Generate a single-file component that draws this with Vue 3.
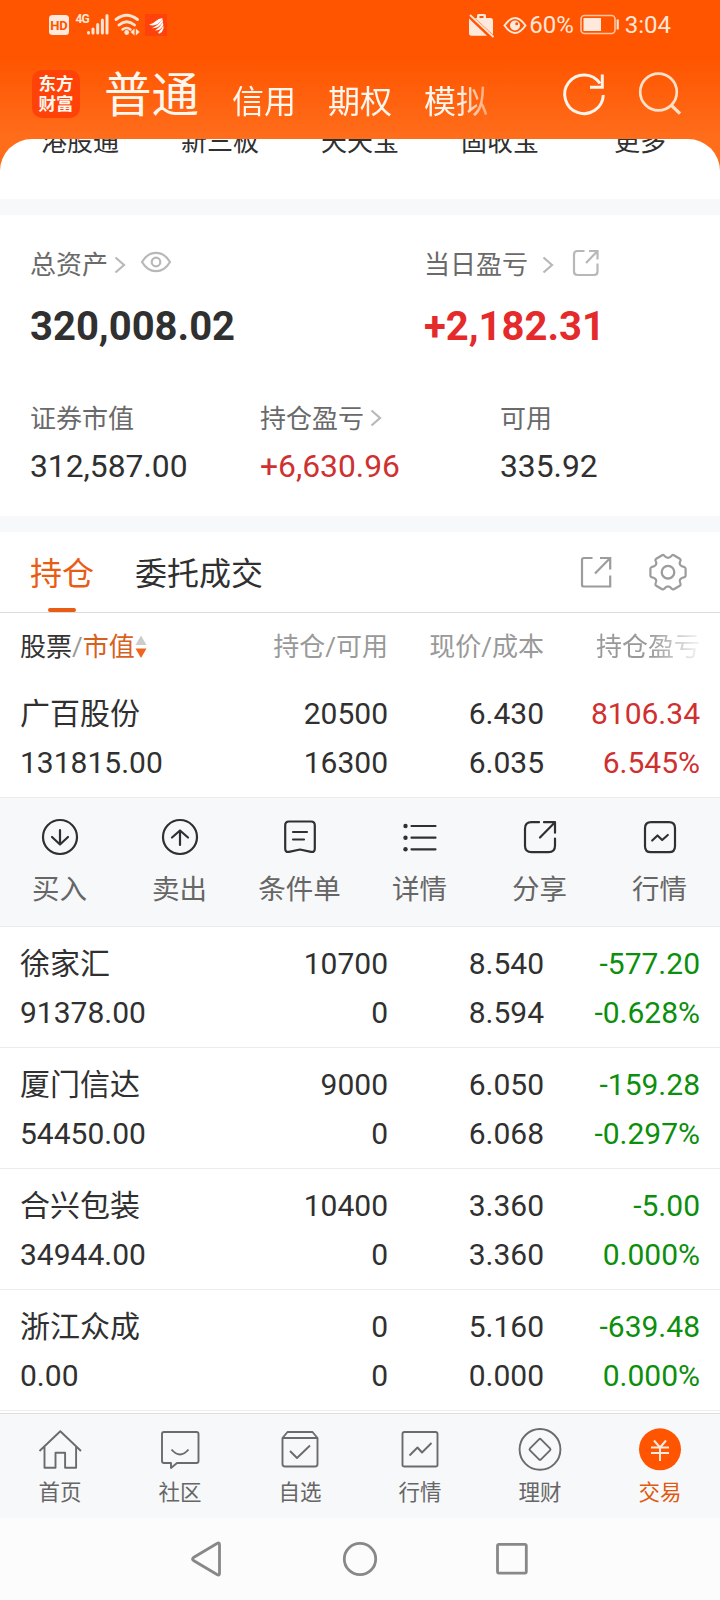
<script setup>
const shortcuts = ['港股通', '新三板', '天天宝', '固收宝', '更多']

const holdings = [
  { name: '广百股份', value: '131815.00', held: '20500', usable: '16300', price: '6.430', cost: '6.035', gain: '8106.34', rate: '6.545%', up: true, open: true },
  { name: '徐家汇', value: '91378.00', held: '10700', usable: '0', price: '8.540', cost: '8.594', gain: '-577.20', rate: '-0.628%' },
  { name: '厦门信达', value: '54450.00', held: '9000', usable: '0', price: '6.050', cost: '6.068', gain: '-159.28', rate: '-0.297%' },
  { name: '合兴包装', value: '34944.00', held: '10400', usable: '0', price: '3.360', cost: '3.360', gain: '-5.00', rate: '0.000%' },
  { name: '浙江众成', value: '0.00', held: '0', usable: '0', price: '5.160', cost: '0.000', gain: '-639.48', rate: '0.000%' }
]

const actions = [
  { label: '买入', d: 'M20 3a17 17 0 1 0 0 34a17 17 0 1 0 0-34M20 13v14.5M12 20l8 7.5l8-7.5' },
  { label: '卖出', d: 'M20 3a17 17 0 1 0 0 34a17 17 0 1 0 0-34M20 28V13.5M12 20.5l8-7l8 7' },
  { label: '条件单', d: 'M9 4.500h22q3.800 0 3.800 3.800v23.200q0 4-3.800 3.300L20 32.500L9 34.800q-3.800.700-3.800-3.300V8.300Q5.200 4.500 9 4.500M13 15h14M13 22.500h11' },
  { label: '详情', d: 'M11.500 9h24M11.500 20.700h24M11.500 32.300h24', list: true },
  { label: '分享', d: 'M19 5.200h-7.500q-6.500 0-6.500 6.500v17q0 6.500 6.500 6.500h17q6.500 0 6.500-6.500V21.500M24 5.200h11v10.500M35 5.200L20 20.500' },
  { label: '行情', d: 'M11 5.200h18q6 0 6 6v18q0 6-6 6H11q-6 0-6-6v-18q0-6 6-6M12.200 23.500l5.300-5l4.700 4.500l5.600-5' }
]

const tabs = [
  { label: '首页', d: 'M3.500 23L24.300 3.200L45 23M8.500 19v20.800h11V24.800h9.600v15h11V19' },
  { label: '社区', d: 'M8 4h32.500q2 0 2 2v27q0 2-2 2H21l-6 5v-5H8q-2 0-2-2V6q0-2 2-2M15.500 21.500q8.500 10 17 0' },
  { label: '自选', d: 'M6.500 10h35v26q0 2.500-2.500 2.500H9q-2.500 0-2.500-2.500V10l5-6h25l5 6M14 23l7 7L34 17.500' },
  { label: '行情', d: 'M8.500 4h31q2 0 2 2v31q0 1.500-2 1.500h-31q-2 0-2-1.500V6q0-2 2-2M13.500 27.500l8-8l4.500 5l9.500-9.500' },
  { label: '理财', d: 'M24 1a20.400 20.400 0 1 0 0 40.800a20.400 20.400 0 1 0 0-40.800M23 11.300q1-1 2 0l9 9q1 1 0 2l-9 9q-1 1-2 0l-9-9q-1-1 0-2z' },
  { label: '交易', active: true }
]
</script>

<template>
  <div class="phone">
    <header class="top">
      <div class="status">
        <svg class="left-status" width="120" height="26" viewBox="0 0 120 26">
          <rect x="0" y="3" width="20" height="20" rx="3.500" fill="#ffe9dd" />
          <text x="10" y="17.700" text-anchor="middle" class="hd">HD</text>
          <text x="26.500" y="11" class="net">4G</text>
          <g stroke="#ffe3d3" stroke-width="3" stroke-linecap="round">
            <path d="M39.500 20.500v.5M44 17v4M48.700 12.500v8.500M53.400 8V21M58 3.500V21" />
          </g>
          <g fill="none" stroke="#ffe3d3" stroke-width="2.900" stroke-linecap="round">
            <path d="M67 7.500q10.500-8.500 21.500 0M70 13q7.700-6.500 15.500 0" />
            <path d="M73.500 17.500q4-3 8 0" stroke-width="2.400" />
          </g>
          <circle cx="77.700" cy="20.500" r="2.400" fill="#ffe3d3" />
          <path d="M85.500 16.500v7l-4-3.500zM86.800 16.500v7l4-3.500z" fill="#ffe3d3" />
          <rect x="96" y="2" width="22" height="22" fill="#ff420b" />
          <g fill="#fff">
            <path d="M100 12.800q4-1 6.500-3.500q3-3 7.200-3.300q-1.200 3.500-5 6q-4 2.500-8.700.8z" />
            <path d="M102.800 16.200q6-2.200 10.700-9.200l.4 2.500q-3.500 7-11.100 6.700z" />
            <path d="M106 18.500q5-3 7.900-8.500l.4 3q-2.300 5.500-8.300 5.500z" />
            <path d="M109 20.800q3.500-3 5.300-7.300l.2 3q-1 3.800-4 5.300z" />
          </g>
        </svg>
        <div class="right-status">
          <svg width="60" height="26" viewBox="0 0 60 26">
            <path d="M1 6.500L19 23.800H3.500Q1 23.800 1 21.300zM7 6H9V3.500q0-1.500 1.500-1.500h6q1.500 0 1.500 1.500V6h4.500q2.500 0 2.500 2.500v14.300zM11.500 4v2h4V4z" fill="#ffe9dd" fill-rule="evenodd" />
            <path d="M2 3L25.500 25" stroke="#ffe3d3" stroke-width="1.800" />
            <path d="M36.500 13.500q10.500-15 21 0q-10.500 15-21 0z" fill="none" stroke="#ffe9dd" stroke-width="2" />
            <circle cx="47" cy="13.500" r="5" fill="#ffe9dd" />
            <circle cx="48.700" cy="11.800" r="1.500" fill="#ff5500" />
          </svg>
          <span class="percent">60%</span>
          <svg width="40" height="22" viewBox="0 0 40 22">
            <rect x="1" y="1.500" width="34" height="18" rx="3.500" fill="none" stroke="#ffc4a0" stroke-width="1.600" />
            <rect x="3.500" y="4" width="17.500" height="13" fill="#ffe9dd" />
            <path d="M37.700 5.500v10" stroke="#ffe3d3" stroke-width="2.200" />
          </svg>
          <span class="clock">3:04</span>
        </div>
      </div>
      <div class="appbar">
        <div class="logo"><span>东方</span><span>财富</span></div>
        <span class="mode-main">普通</span>
        <nav class="modes"><span>信用</span><span>期权</span><span>模拟</span></nav>
        <svg class="tools" width="124" height="48" viewBox="0 0 124 48" fill="none">
          <path d="M39 13.500A19.300 19.300 0 1 0 42.300 25" stroke="#fff3eb" stroke-width="3" />
          <path d="M41.300 4.500v12.800H29" stroke="#fff3eb" stroke-width="3" />
          <circle cx="97.500" cy="22" r="18.300" stroke="#ffe0c8" stroke-width="2.700" />
          <path d="M110 35l9 8.700" stroke="#ffe0c8" stroke-width="3.200" />
        </svg>
      </div>
    </header>

    <section class="shortcuts">
      <div class="shortcut-row"><span v-for="s in shortcuts" :key="s">{{ s }}</span></div>
    </section>

    <section class="assets">
      <div class="summary">
        <div>
          <div class="label">总资产
            <svg class="chev near" width="12" height="18" viewBox="0 0 12 18"><path d="M1.500 1.500L10 9l-8.500 7.500" /></svg>
            <svg class="eye" width="32" height="22" viewBox="0 0 32 22"><path d="M2 11Q7.500 1.800 16 1.800T30 11Q24.500 20.200 16 20.200T2 11z" /><circle cx="16" cy="11" r="4.300" /></svg>
          </div>
          <div class="big">320,008.02</div>
        </div>
        <div>
          <div class="label">当日盈亏
            <svg class="chev far" width="12" height="18" viewBox="0 0 12 18"><path d="M1.500 1.500L10 9l-8.500 7.500" /></svg>
            <svg class="share-sm" width="28" height="28" viewBox="0 0 28 28"><path d="M12.500 2H5.500Q2 2 2 5.500v17Q2 26 5.500 26h16.500q3.500 0 3.500-3.500V14.500M17 2h8.500v8.500M25.500 2L14 14" /></svg>
          </div>
          <div class="big red">+2,182.31</div>
        </div>
      </div>
      <div class="details">
        <div><div class="label">证券市值</div><div class="mid">312,587.00</div></div>
        <div>
          <div class="label">持仓盈亏
            <svg class="chev pos" width="12" height="18" viewBox="0 0 12 18"><path d="M1.500 1.500L10 9l-8.500 7.500" /></svg>
          </div>
          <div class="mid crimson">+6,630.96</div>
        </div>
        <div><div class="label">可用</div><div class="mid">335.92</div></div>
      </div>
    </section>

    <section class="book">
      <div class="book-tabs">
        <span class="book-tab on">持仓</span>
        <span class="book-tab">委托成交</span>
        <svg class="book-tools" width="108" height="40" viewBox="0 0 108 40">
          <path d="M12.500 6H4Q2 6 2 8v25q0 1.500 2 1.500H30.200V23.500M20 6H30.200v11.500M30.200 6L15 21.500" />
          <g transform="translate(88 20.200)">
            <path stroke-linejoin="round" d="M16.500-5Q17.600-4.600 17.600-3.500V3.500Q17.600 4.600 16.500 5Q9.500 6.500 12.600 11.800Q12.800 13 11.800 13.500L5.800 17Q4.800 17.500 4 16.800Q0 11.700-4 16.800Q-4.800 17.500-5.800 17L-11.800 13.500Q-12.800 13-12.600 11.800Q-9.500 6.500-16.500 5Q-17.600 4.600-17.600 3.500V-3.500Q-17.600-4.600-16.500-5Q-9.500-6.500-12.600-11.800Q-12.800-13-11.800-13.500L-5.800-17Q-4.800-17.500-4-16.800Q0-11.700 4-16.800Q4.800-17.500 5.800-17L11.800-13.500Q12.800-13 12.600-11.800Q9.500-6.500 16.500-5z" />
            <circle r="6.300" stroke-width="2.300" />
          </g>
        </svg>
      </div>

      <div class="grid head">
        <span class="first"><b>股票</b>/<em>市值</em><svg width="12" height="24" viewBox="0 0 12 24"><path d="M6 .5l5.500 9.500H.5z" fill="#ccc" /><path d="M6 23L.5 13.500h11z" fill="#f0641e" /></svg></span>
        <span>持仓/可用</span>
        <span>现价/成本</span>
        <span class="fade">持仓盈亏</span>
      </div>

      <template v-for="h in holdings" :key="h.name">
        <div class="grid row">
          <span class="first">{{ h.name }}</span><span>{{ h.held }}</span><span>{{ h.price }}</span><span :class="h.up ? 'crimson' : 'green'">{{ h.gain }}</span>
          <span class="first">{{ h.value }}</span><span>{{ h.usable }}</span><span>{{ h.cost }}</span><span :class="h.up ? 'crimson' : 'green'">{{ h.rate }}</span>
        </div>
        <div v-if="h.open" class="actions">
          <div v-for="a in actions" :key="a.label" class="action">
            <svg width="40" height="40" viewBox="0 0 40 40">
              <path :d="a.d" />
              <g v-if="a.list" class="dots"><circle cx="5.500" cy="9" r="2.200" /><circle cx="5.500" cy="20.700" r="2.200" /><circle cx="5.500" cy="32.300" r="2.200" /></g>
            </svg>
            <span>{{ a.label }}</span>
          </div>
        </div>
      </template>
    </section>

    <nav class="tabbar">
      <div v-for="t in tabs" :key="t.label" class="tab" :class="{ active: t.active }">
        <svg width="48" height="44" viewBox="0 0 48 44">
          <path v-if="t.d" :d="t.d" />
          <template v-else>
            <circle cx="24" cy="21.300" r="21" />
            <path class="yen" d="M18 12.500l6 7l6-7M15 19.500h18M15 25h18M24 19.500V33" />
          </template>
        </svg>
        <span>{{ t.label }}</span>
      </div>
    </nav>

    <footer class="system">
      <svg width="340" height="40" viewBox="0 0 340 40">
        <path d="M27 4.500q2.500-1.500 2.500 1v29q0 2.500-2.500 1L3.500 21.500q-2-1.500 0-3z" />
        <circle cx="170" cy="20" r="15.700" />
        <rect x="307.500" y="5.300" width="28.800" height="28.800" rx="1.500" />
      </svg>
    </footer>
  </div>
</template>

<style>
body {
  background: #fff;
}
</style>

<style scoped>
.phone {
  width: 720px;
  height: 1600px;
  overflow: hidden;
  display: flex;
  flex-direction: column;
  background: #fff;
  color: #303030;
  font-family: Roboto, "Noto Sans CJK SC", sans-serif;
}
svg {
  display: block;
  flex: none;
}
.top {
  height: 172px;
  flex: none;
  background: linear-gradient(#ff5500 58px, #ff6c1a 135px);
}
.status {
  height: 50px;
  box-sizing: border-box;
  padding: 0 49px;
  display: flex;
  align-items: center;
  justify-content: space-between;
  color: #ffe6d8;
  font-size: 24px;
}
.hd {
  font: bold 13px Roboto, sans-serif;
  fill: #ff5500;
}
.net {
  font: bold 12px Roboto, sans-serif;
  letter-spacing: -1px;
  fill: #ffe3d3;
}
.left-status {
  overflow: visible;
}
.right-status {
  display: flex;
  align-items: center;
}
.percent {
  margin: 0 6px 0 1px;
}
.clock {
  margin-left: 5px;
}
.appbar {
  height: 88px;
  padding-left: 32px;
  display: flex;
  align-items: center;
  color: #fff6ee;
}
.logo {
  width: 48px;
  height: 48px;
  box-sizing: border-box;
  padding: 4px 0;
  border-radius: 10px;
  background: #ff4208;
  display: flex;
  flex-direction: column;
  align-items: center;
  font-size: 17.500px;
  font-weight: 700;
  line-height: 20px;
}
.mode-main {
  margin-left: 24px;
  padding-top: 4px;
  width: 96px;
  font-size: 47.500px;
  line-height: 84px;
  white-space: nowrap;
}
.modes {
  margin-left: 32px;
  width: 256px;
  padding-top: 16px;
  display: flex;
  gap: 32px;
  font-size: 32px;
  line-height: 40px;
  -webkit-mask-image: linear-gradient(90deg, #000 226px, rgba(0, 0, 0, 0.45) 256px);
  mask-image: linear-gradient(90deg, #000 226px, rgba(0, 0, 0, 0.45) 256px);
}
.tools {
  margin-left: 73px;
}
.shortcuts {
  height: 60px;
  flex: none;
  margin-top: -33px;
  border-radius: 32px 32px 0 0;
  background: #fff;
  overflow: hidden;
}
.shortcut-row {
  display: grid;
  grid-template-columns: repeat(5, 140px);
  justify-content: center;
  margin-top: -17px;
  text-align: center;
  font-size: 26px;
  line-height: 40px;
}
.assets {
  height: 317px;
  flex: none;
  box-sizing: border-box;
  padding: 31px 30px 0;
  border-top: 16px solid #f7f8fa;
}
.label {
  display: flex;
  align-items: center;
  height: 38px;
  color: #6a6a6a;
  font-size: 26px;
  line-height: 38px;
}
.label svg {
  fill: none;
  stroke: #b8b8b8;
  stroke-width: 2.200;
}
.chev.near {
  margin-left: 6px;
}
.label .eye {
  margin: -6px 0 0 14px;
}
.chev.far {
  margin-left: 14px;
}
.label .share-sm {
  margin: -4px 0 0 18px;
}
.chev.pos {
  margin: -2px 0 0 6px;
}
.summary {
  display: grid;
  grid-template-columns: 394px 1fr;
}
.big {
  margin-top: 18px;
  height: 50px;
  line-height: 50px;
  font-size: 40px;
  font-weight: 700;
}
.details {
  margin-top: 48px;
  display: grid;
  grid-template-columns: 230px 240px 1fr;
}
.mid {
  margin-top: 8px;
  font-size: 31.800px;
  line-height: 40px;
}
.red {
  color: #e42a2a;
}
.crimson {
  color: #cf3030;
}
.green {
  color: #0c8f0c;
}
.book {
  flex: 1;
  border-top: 16px solid #f7f8fa;
}
.book-tabs {
  height: 80px;
  padding-left: 30px;
  border-bottom: 1px solid #dcdcdc;
  display: flex;
  gap: 41px;
  font-size: 32px;
  line-height: 84px;
}
.book-tab.on {
  position: relative;
  color: #e85c14;
}
.book-tab.on::after {
  content: "";
  position: absolute;
  left: 18px;
  top: 76px;
  width: 28px;
  height: 4px;
  border-radius: 2px;
  background: #e85c14;
}
.book-tools {
  margin: 20px 32px 0 auto;
  fill: none;
  stroke: #9c9c9c;
  stroke-width: 2.200;
}
.grid {
  display: grid;
  grid-template-columns: 217px 151px 156px 156px;
  padding: 0 20px;
  text-align: right;
}
.first {
  text-align: left;
}
.head {
  height: 64px;
  color: #999;
  font-size: 26px;
  line-height: 68px;
}
.head .first {
  display: flex;
  align-items: center;
  height: 68px;
}
.head b {
  font-weight: 400;
  color: #333;
}
.head em {
  font-style: normal;
  color: #d8601e;
}
.head .first svg {
  margin-left: 0;
}
.fade {
  -webkit-mask-image: linear-gradient(90deg, #000 106px, rgba(0, 0, 0, 0.2) 150px);
  mask-image: linear-gradient(90deg, #000 106px, rgba(0, 0, 0, 0.2) 150px);
}
.row {
  height: 108px;
  padding-top: 12px;
  border-bottom: 1px solid #ececec;
  grid-template-rows: 49px 49px;
  align-content: start;
  font-size: 30px;
  line-height: 49px;
}
.actions {
  height: 128px;
  border-bottom: 1px solid #ececec;
  background: #f7f8fa;
  display: grid;
  grid-template-columns: repeat(6, 120px);
}
.action {
  display: flex;
  flex-direction: column;
  align-items: center;
  padding-top: 19px;
  color: #666;
  font-size: 27.500px;
  line-height: 40px;
}
.action span {
  margin: 13px 1px 0 0;
}
.action svg {
  fill: none;
  stroke: #303030;
  stroke-width: 2.200;
  stroke-linecap: round;
  stroke-linejoin: round;
}
.action .dots {
  fill: #303030;
  stroke: none;
}
.tabbar {
  height: 104px;
  flex: none;
  border-top: 1px solid #dedede;
  background: #f7f8fa;
  display: grid;
  grid-template-columns: repeat(6, 120px);
}
.tab {
  display: flex;
  flex-direction: column;
  align-items: center;
  padding-top: 14px;
  color: #666;
  font-size: 21.500px;
  line-height: 30px;
}
.tab span {
  margin-top: 6px;
}
.tab svg {
  fill: none;
  stroke: #6b6b6b;
  stroke-width: 1.900;
  stroke-linejoin: round;
}
.tab.active {
  color: #e0590f;
}
.tab.active circle {
  fill: #ff5500;
  stroke: none;
}
.tab .yen {
  stroke: #ffe9dd;
  stroke-width: 2;
}
.system {
  height: 82px;
  flex: none;
  background: #fcfcfc;
  display: flex;
  align-items: center;
  justify-content: center;
}
.system svg {
  fill: none;
  stroke: #888;
  stroke-width: 2.800;
}
</style>
